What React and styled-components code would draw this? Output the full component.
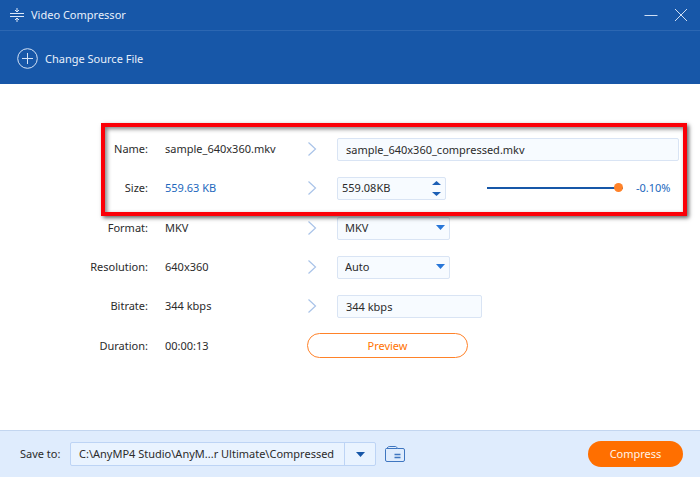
import React, { useState } from "react";
import styled, { createGlobalStyle } from "styled-components";

const GlobalStyle = createGlobalStyle`
  * {
    box-sizing: border-box;
  }
  body {
    margin: 0;
    background: #ffffff;
  }
  body, button, input, select {
    font-family: "Noto Sans", "Open Sans", sans-serif;
    font-size: 11px;
    line-height: 16px;
    color: #2b2b2b;
  }
  button {
    padding: 0;
    border: none;
    background: none;
    cursor: pointer;
  }
`

const Window = styled.div`
  min-height: 100vh;
  display: flex;
  flex-direction: column;
`
const TitleBar = styled.header`
  height: 31px;
  padding: 0 12px 0 10px;
  display: flex;
  align-items: center;
  justify-content: space-between;
  background: #1757a8;
  border-bottom: 1px solid #2c67b2;
`
const Title = styled.h1`
  margin: 0;
  display: flex;
  align-items: center;
  gap: 7px;
  font-size: 11px;
  font-weight: 400;
  color: #e8f0fb;
`
const WindowButtons = styled.div`
  display: flex;
  gap: 16px;
`
const WindowButton = styled.button`
  display: flex;
`
const Toolbar = styled.div`
  padding: 17px 17px 15px;
  display: flex;
  align-items: center;
  background: #1757a8;
`
const SourceButton = styled.button`
  display: flex;
  align-items: center;
  gap: 7px;
  color: #e8f0fb;
`
const Main = styled.main`
  flex: 1;
  padding: 53px 21px 51px 0;
  display: flex;
  flex-direction: column;
  gap: 16px;
`
const Group = styled.div`
  position: relative;
  display: flex;
  flex-direction: column;
  gap: 15px;
`
const Highlight = styled.div`
  position: absolute;
  inset: -14px -8px -16px 101px;
  border: 4px solid #fb0007;
  box-shadow: 2px 2px 4px rgba(0, 0, 0, 0.6), inset 2px 2px 4px rgba(0, 0, 0, 0.5);
  pointer-events: none;
  z-index: 1;
`
const Row = styled.div`
  display: grid;
  grid-template-columns: 148px 126px 14px 1fr;
  column-gap: 16px;
  align-items: center;
  height: 24px;
`
const Label = styled.label`
  text-align: right;
`
const Value = styled.span`
  padding-left: 1px;
  color: ${(props) => (props.$accent ? "#2268bd" : "#2b2b2b")};
`
const FieldArea = styled.div`
  display: flex;
  align-items: center;
  padding-left: 1px;
`
const Input = styled.input`
  width: ${(props) => props.$width || "100%"};
  height: 23px;
  padding: 0 8px;
  border: 1px solid #d9e4f4;
  border-radius: 2px;
  background: #f7fbff;
`
const SelectBox = styled.div`
  position: relative;
  width: 113px;
  height: 23px;

  svg {
    position: absolute;
    right: 5px;
    top: 8px;
    pointer-events: none;
  }
`
const Select = styled.select`
  appearance: none;
  width: 100%;
  height: 100%;
  padding: 0 7px;
  border: 1px solid #d9e4f4;
  border-radius: 2px;
  background: #f7fbff;
`
const Spinner = styled.div`
  width: 109px;
  height: 23px;
  padding-right: 4px;
  display: flex;
  align-items: center;
  border: 1px solid #d9e4f4;
  border-radius: 2px;
  background: #f7fbff;
`
const SpinnerInput = styled.input`
  flex: 1;
  min-width: 0;
  padding: 0 4px;
  border: none;
  background: none;
`
const SpinnerButtons = styled.div`
  display: flex;
  flex-direction: column;
  gap: 7px;
`
const SpinnerButton = styled.button`
  display: flex;
`
const Slider = styled.input`
  appearance: none;
  flex: 1;
  min-width: 0;
  height: 9px;
  margin: 0 13px 0 41px;
  background: none;

  &::-webkit-slider-runnable-track {
    height: 2px;
    background: #1757a8;
  }
  &::-webkit-slider-thumb {
    appearance: none;
    width: 9px;
    height: 9px;
    margin-top: -4px;
    border-radius: 50%;
    background: #ff8229;
  }
`
const Percent = styled.output`
  width: 43px;
  color: #2268bd;
`
const PreviewRow = styled(Row)`
  grid-template-columns: 148px 126px 1fr;
`
const PreviewButton = styled.button`
  width: 161px;
  height: 25px;
  margin-left: 1px;
  border: 1px solid #ff8229;
  border-radius: 13px;
  color: #ff7300;
`
const Footer = styled.footer`
  height: 47px;
  padding: 0 17px 0 20px;
  display: flex;
  align-items: center;
  background: #dfecfd;
  border-top: 1px solid #c3d6f0;
`
const SaveLabel = styled.label`
  width: 42px;
  white-space: nowrap;
`
const PathBox = styled.div`
  width: 306px;
  height: 24px;
  margin: 0 9px 0 8px;
  display: flex;
  border: 1px solid #bdd4f5;
  border-radius: 2px;
  background: #e9f3ff;
`
const PathInput = styled.input`
  flex: 1;
  min-width: 0;
  padding: 0 8px;
  border: none;
  background: none;
`
const PathButton = styled.button`
  width: 31px;
  display: flex;
  align-items: center;
  justify-content: center;
  border-left: 1px solid #bdd4f5;
`
const FolderButton = styled.button`
  display: flex;
`
const CompressButton = styled.button`
  width: 95px;
  height: 26px;
  margin-left: auto;
  border-radius: 13px;
  background: #ff6f00;
  color: #fff3e8;
`

const CompressIcon = () => (
  <svg width="14" height="14" viewBox="0 0 14 14" fill="none" stroke="#dce8f8">
    <path d="M0 5.5h14M0 8.5h14" />
    <path d="M7 0v4M7 14v-4" />
    <path d="M5 2l2 2 2-2M5 12l2-2 2 2" />
  </svg>
)

const PlusIcon = () => (
  <svg width="21" height="21" viewBox="0 0 21 21" fill="none" stroke="#d5e3f6">
    <circle cx="10.5" cy="10.5" r="9.8" />
    <path d="M10.5 5v11M5 10.5h11" />
  </svg>
)

const Chevron = () => (
  <svg width="11" height="14" viewBox="0 0 11 14" fill="none" stroke="#a9c3e8" strokeWidth="1.2">
    <path d="M2.5 0.5L9.5 7l-7 6.5" />
  </svg>
)

const Triangle = ({ up, width = 9, height = 5, color = "#1c5fb5" }) => (
  <svg width={width} height={height} viewBox="0 0 10 6" preserveAspectRatio="none" fill={color}>
    <path d={up ? "M0 6L5 0l5 6z" : "M0 0h10L5 6z"} />
  </svg>
)

const FolderIcon = () => (
  <svg width="20" height="17" viewBox="0 0 20 17" fill="none" stroke="#3f76c0">
    <path d="M0.5 14V3.5q0-1 1-1L3 1.2q.5-.7 1.2-.7h6.3q.8 0 1.2.7l.8 1.3H18q1.5 0 1.5 1.5v10q0 1.5-1.5 1.5H2Q.5 15.5.5 14z" />
    <path d="M1.5 2.5h11" />
    <path d="M9.5 8.5h6M9.5 11.5h6" strokeWidth="1.3" />
  </svg>
)

const App = () => {
  const [name, setName] = useState("sample_640x360_compressed.mkv")
  const [size, setSize] = useState("559.08KB")
  const [bitrate, setBitrate] = useState("344 kbps")
  const [path, setPath] = useState("C:\\AnyMP4 Studio\\AnyM...r Ultimate\\Compressed")

  return (
    <>
      <GlobalStyle />
      <Window>
        <TitleBar>
          <Title>
            <CompressIcon />
            Video Compressor
          </Title>
          <WindowButtons>
            <WindowButton aria-label="Minimize">
              <svg width="14" height="14" viewBox="0 0 14 14" stroke="#cfdff4">
                <path d="M0.5 7.5h13" />
              </svg>
            </WindowButton>
            <WindowButton aria-label="Close">
              <svg width="14" height="14" viewBox="0 0 14 14" stroke="#cfdff4">
                <path d="M1 1l12 12M13 1L1 13" />
              </svg>
            </WindowButton>
          </WindowButtons>
        </TitleBar>
        <Toolbar>
          <SourceButton>
            <PlusIcon />
            Change Source File
          </SourceButton>
        </Toolbar>

        <Main>
          <Group>
            <Highlight />
            <Row>
              <Label htmlFor="name">Name:</Label>
              <Value>sample_640x360.mkv</Value>
              <Chevron />
              <FieldArea>
                <Input id="name" value={name} onChange={(e) => setName(e.target.value)} />
              </FieldArea>
            </Row>
            <Row>
              <Label htmlFor="size">Size:</Label>
              <Value $accent>559.63 KB</Value>
              <Chevron />
              <FieldArea>
                <Spinner>
                  <SpinnerInput id="size" value={size} onChange={(e) => setSize(e.target.value)} />
                  <SpinnerButtons>
                    <SpinnerButton aria-label="Increase size">
                      <Triangle up height={4} />
                    </SpinnerButton>
                    <SpinnerButton aria-label="Decrease size">
                      <Triangle height={4} />
                    </SpinnerButton>
                  </SpinnerButtons>
                </Spinner>
                <Slider type="range" aria-label="Compression" min="0" max="100" defaultValue="100" />
                <Percent>-0.10%</Percent>
              </FieldArea>
            </Row>
          </Group>

          <Group>
            <Row>
              <Label htmlFor="format">Format:</Label>
              <Value>MKV</Value>
              <Chevron />
              <FieldArea>
                <SelectBox>
                  <Select id="format">
                    <option>MKV</option>
                  </Select>
                  <Triangle color="#2876d8" />
                </SelectBox>
              </FieldArea>
            </Row>
            <Row>
              <Label htmlFor="resolution">Resolution:</Label>
              <Value>640x360</Value>
              <Chevron />
              <FieldArea>
                <SelectBox>
                  <Select id="resolution">
                    <option>Auto</option>
                  </Select>
                  <Triangle color="#2876d8" />
                </SelectBox>
              </FieldArea>
            </Row>
            <Row>
              <Label htmlFor="bitrate">Bitrate:</Label>
              <Value>344 kbps</Value>
              <Chevron />
              <FieldArea>
                <Input
                  id="bitrate"
                  $width="145px"
                  value={bitrate}
                  onChange={(e) => setBitrate(e.target.value)}
                />
              </FieldArea>
            </Row>
            <PreviewRow>
              <Label as="span">Duration:</Label>
              <Value>00:00:13</Value>
              <PreviewButton>Preview</PreviewButton>
            </PreviewRow>
          </Group>
        </Main>

        <Footer>
          <SaveLabel htmlFor="path">Save to:</SaveLabel>
          <PathBox>
            <PathInput id="path" value={path} onChange={(e) => setPath(e.target.value)} />
            <PathButton aria-label="Choose folder">
              <Triangle color="#1757a8" />
            </PathButton>
          </PathBox>
          <FolderButton aria-label="Open folder">
            <FolderIcon />
          </FolderButton>
          <CompressButton>Compress</CompressButton>
        </Footer>
      </Window>
    </>
  )
}

export default App
